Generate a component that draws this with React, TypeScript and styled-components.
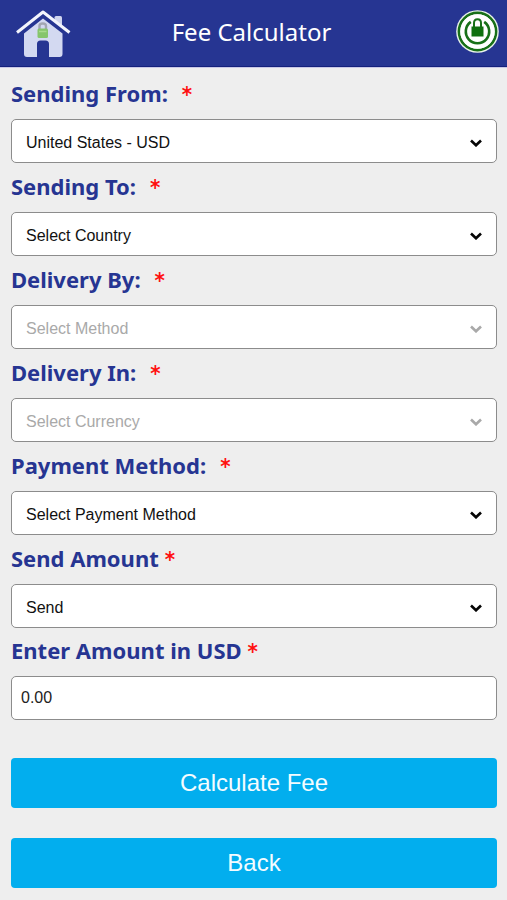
import React from "react";
import styled, { createGlobalStyle } from "styled-components";

const GlobalStyle = createGlobalStyle`
  *, *::before, *::after { box-sizing: border-box; }
  body {
    margin: 0;
    background: #eeeeee;
    font-family: "Liberation Sans", Arial, sans-serif;
  }
`;

const headingFont = `"Noto Sans", Tahoma, sans-serif`;

const Header = styled.header`
  display: grid;
  grid-template-columns: 60px 1fr 68px;
  align-items: center;
  height: 67px;
  padding: 0 8px 0 12px;
  background: #263592;
  border-bottom: 1px solid #14207c;
  box-shadow: 0 1px 0 #c9c8e6;
`;

const Title = styled.h1`
  margin: 0 0 2px;
  text-align: center;
  color: #ffffff;
  font-family: ${headingFont};
  font-size: 24px;
  font-weight: 400;
  line-height: 32px;
`;

const HomeLink = styled.a`
  display: block;
  height: 46px;
`;

const SecureButton = styled.button`
  justify-self: end;
  display: block;
  width: 43px;
  height: 43px;
  margin-bottom: 4px;
  padding: 0;
  border: 0;
  background: none;
  cursor: pointer;
`;

const Form = styled.form`
  display: flex;
  flex-direction: column;
  padding: 3px 10px 12px 11px;
`;

const Field = styled.div`
  display: flex;
  flex-direction: column;
`;

const Label = styled.label<{ $compact?: boolean }>`
  padding: ${(p) => (p.$compact ? 6 : 7)}px 0 10px;
  color: #263592;
  font-family: ${headingFont};
  font-size: 22px;
  font-weight: 700;
  line-height: 32px;
`;

const Required = styled.span<{ $wide?: boolean }>`
  margin-left: ${(p) => (p.$wide ? 14 : 6)}px;
  color: #ff1010;
  font-family: "DejaVu Sans Condensed", "DejaVu Sans", sans-serif;
  line-height: 1;
`;

const SelectWrap = styled.div`
  display: grid;
  align-items: center;

  > * {
    grid-area: 1 / 1;
  }
`;

const Select = styled.select`
  appearance: none;
  width: 100%;
  height: 44px;
  padding: 3px 40px 0 14px;
  border: 1px solid #8c8c8c;
  border-radius: 5px;
  background: #ffffff;
  color: #111111;
  font-family: inherit;
  font-size: 16px;

  &:disabled {
    color: #a9a9a9;
    opacity: 1;
  }
`;

const Chevron = styled.svg<{ $muted?: boolean }>`
  justify-self: end;
  width: 12px;
  height: 8px;
  margin: 3px 15px 0 0;
  pointer-events: none;
  fill: none;
  stroke: ${(p) => (p.$muted ? "#a9a9a9" : "#050505")};
  stroke-width: 2.6;
`;

const AmountInput = styled.input`
  width: 100%;
  height: 44px;
  padding: 0 9px;
  border: 1px solid #8c8c8c;
  border-radius: 5px;
  background: #ffffff;
  color: #222222;
  font-family: inherit;
  font-size: 16px;
`;

const Actions = styled.div`
  display: flex;
  flex-direction: column;
  gap: 30px;
  margin-top: 38px;
`;

const ActionButton = styled.button`
  height: 50px;
  border: 0;
  border-radius: 4px;
  background: #02aeee;
  color: #f4fcff;
  font-family: inherit;
  font-size: 24px;
  cursor: pointer;
`;

type FieldSpec = {
  id: string;
  label: string;
  value: string;
  disabled?: boolean;
};

const fields: FieldSpec[] = [
  { id: "from", label: "Sending From:", value: "United States - USD" },
  { id: "to", label: "Sending To:", value: "Select Country" },
  { id: "by", label: "Delivery By:", value: "Select Method", disabled: true },
  { id: "in", label: "Delivery In:", value: "Select Currency", disabled: true },
  { id: "payment", label: "Payment Method:", value: "Select Payment Method" },
  { id: "send", label: "Send Amount", value: "Send" },
];

function HomeIcon() {
  return (
    <svg width="60" height="50" viewBox="0 0 60 50" aria-hidden="true">
      <path
        d="M12 23.500 31 8.500l19.500 15V44q0 3-3 3H37V34q0-3.500-3.500-3.500h-5Q25 30.500 25 34v13H15q-3 0-3-3z"
        fill="#d3d9f1"
      />
      <path d="M4.500 22.500 31 2l26.500 20.500" fill="none" stroke="#263592" strokeWidth="8" />
      <path d="M42.500 7.500q0-1.500 1.500-1.500h4.500q1.500 0 1.500 1.500v9.500l-7.500-6z" fill="#cfd5ef" />
      <path
        d="M5 22.500 31 2l26.500 20.500"
        fill="none"
        stroke="#f2f4fc"
        strokeWidth="3"
        strokeLinejoin="round"
      />
      <path d="M27.500 19v-3q0-2.500 3.200-2.500T34 16v3" fill="none" stroke="#a2a6b2" strokeWidth="2.400" />
      <rect x="25.500" y="18.500" width="10.500" height="9.500" rx="1.500" fill="#86c56c" />
      <path d="M27 21.500h7.500" stroke="#a8db8d" strokeWidth="1.500" />
    </svg>
  );
}

function SecureIcon() {
  return (
    <svg width="43" height="43" viewBox="0 0 43 43" aria-hidden="true">
      <circle cx="21.500" cy="21.500" r="21.300" fill="#e9f3ea" />
      <circle cx="21.500" cy="21.500" r="18.600" fill="none" stroke="#187018" strokeWidth="2.600" />
      <circle cx="21.500" cy="21.500" r="17.200" fill="#ffffff" />
      <path
        d="M14.800 11.900a11.700 11.700 0 1 0 13.400 0"
        fill="none"
        stroke="#187018"
        strokeWidth="2.600"
      />
      <path d="M18 18v-5q0-3.800 3.500-3.800T25 13v5" fill="none" stroke="#187018" strokeWidth="2" />
      <rect x="15.500" y="16.500" width="12" height="10" fill="#107010" />
    </svg>
  );
}

export default function App() {
  return (
    <>
      <GlobalStyle />
      <Header>
        <HomeLink href="#" aria-label="Home">
          <HomeIcon />
        </HomeLink>
        <Title>Fee Calculator</Title>
        <SecureButton type="button" aria-label="Secure session">
          <SecureIcon />
        </SecureButton>
      </Header>
      <Form onSubmit={(e) => e.preventDefault()}>
        {fields.map((f) => (
          <Field key={f.id}>
            <Label htmlFor={f.id}>
              {f.label}
              <Required $wide={f.label.endsWith(":")}>*</Required>
            </Label>
            <SelectWrap>
              <Select id={f.id} disabled={f.disabled}>
                <option>{f.value}</option>
              </Select>
              <Chevron viewBox="0 0 12 8" $muted={f.disabled} aria-hidden="true">
                <path d="M1 1.500 6 6.300 11 1.500" />
              </Chevron>
            </SelectWrap>
          </Field>
        ))}
        <Field>
          <Label htmlFor="amount" $compact>
            Enter Amount in USD
            <Required>*</Required>
          </Label>
          <AmountInput id="amount" type="text" inputMode="decimal" defaultValue="0.00" />
        </Field>
        <Actions>
          <ActionButton type="submit">Calculate Fee</ActionButton>
          <ActionButton type="button">Back</ActionButton>
        </Actions>
      </Form>
    </>
  );
}
